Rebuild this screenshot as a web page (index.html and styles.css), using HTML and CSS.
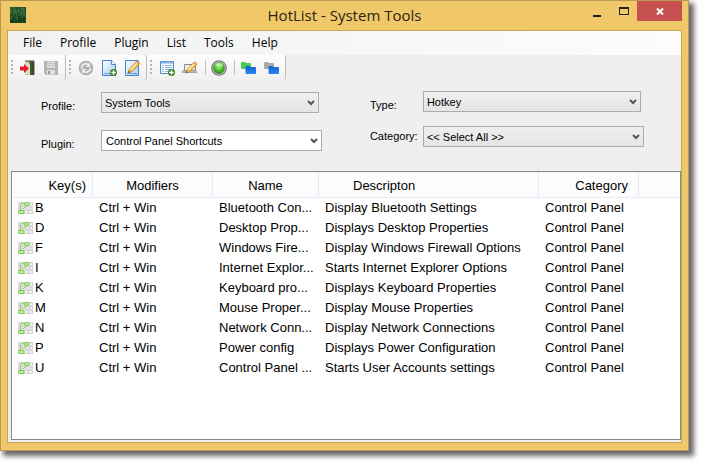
FILE: index.html
```
<!DOCTYPE html>
<html lang="en">
<head>
<meta charset="utf-8">
<title>HotList - System Tools</title>
<link rel="stylesheet" href="styles.css">
</head>
<body>
<svg class="defs" aria-hidden="true">
  <defs>
    <linearGradient id="door" x1="0" x2="1" y1="0" y2="0"><stop offset="0" stop-color="#d4d4d0"/><stop offset=".45" stop-color="#a4aca0"/><stop offset=".55" stop-color="#3d6a20"/><stop offset="1" stop-color="#2b3b1c"/></linearGradient>
    <linearGradient id="paper" x1="0" x2="1" y1="0" y2="1"><stop offset="0" stop-color="#fff"/><stop offset="1" stop-color="#a9cdf2"/></linearGradient>
    <radialGradient id="green" cx=".5" cy=".4" r=".6"><stop offset="0" stop-color="#a8f58a"/><stop offset=".6" stop-color="#47c026"/><stop offset="1" stop-color="#1d7d10"/></radialGradient>
    <linearGradient id="blue" x1="0" x2="0" y1="0" y2="1"><stop offset="0" stop-color="#1660d0"/><stop offset="1" stop-color="#2a86f5"/></linearGradient>
    <symbol id="plus" viewBox="0 0 7 7"><circle cx="3.500" cy="3.500" r="3.500" fill="#3f8424"/><path d="M3.500 1.300v4.400M1.300 3.500h4.400" stroke="#fff" stroke-width="1.300"/></symbol>
    <symbol id="pencil" viewBox="0 0 14 14"><path d="M1 13l1.500-4L9.500 1.500q1-.8 2 0l.8.900q.8 1 0 2L5 11.500z" fill="#f7bd4b" stroke="#b47a26" stroke-width=".8"/><path d="M3.500 9.800L10 3" stroke="#fff0a8" stroke-width="1.500"/><path d="M9 2.500l2.500 2.500 1-1V2.500L11 1z" fill="#e7a27c"/><path d="M1 13l.8-2 1.300 1.200z" fill="#444"/></symbol>
    <symbol id="keys" viewBox="0 0 15 12"><path d="M0 0h15v12H0z" fill="#dddedd"/><g fill="#f8f8f8" stroke="#c2c2c2" stroke-width=".6"><rect x="1" y=".5" width="4" height="3" rx="1"/><rect x="11" y="1" width="3.500" height="3" rx="1"/><rect x="8" y="4.800" width="3" height="2.500" rx="1"/><rect x="11.500" y="5" width="3" height="2.500" rx="1"/><rect x="6.500" y="8.500" width="3.500" height="3" rx="1"/><rect x="10.800" y="8.500" width="3.500" height="3" rx="1"/></g><path d="M2.500 9V3q0-1.500 2-1.500h3M8 4L5 7" fill="none" stroke="#86cf62"/><rect x="6.500" y=".5" width="4.500" height="3" rx="1.200" fill="#b5f48e" stroke="#68bb45" stroke-width=".8"/><rect x=".5" y="8.500" width="5.500" height="3" rx="1" fill="#b5f48e" stroke="#68bb45" stroke-width=".8"/></symbol>
  </defs>
</svg>
<div class="window">
  <header class="titlebar">
    <svg class="app-icon" viewBox="0 0 16 16"><path d="M0 0h16v16H0z" fill="#24502a"/><path d="M1 1v6M4 0v5M6 2v7M9 1v5M12 0v6M14 3v6M2 9v3M7 10v3" stroke="#3f7a3a"/><path d="M0 4h1M3 7h1M8 4h1M10 7h2M13 2h1M5 4h1" stroke="#5a9450"/><path d="M3 10v6M6 12v4M9 9v7M11 11v5M14 10v6M1 13v3" stroke="#0c260f"/><path d="M2 2h1M7 1h1M10 3h1M15 5h1M5 8h1" stroke="#153c1b"/></svg>
    <h1>HotList - System Tools</h1>
    <div class="controls">
      <button class="ctl" aria-label="Minimize"><svg viewBox="0 0 8 8"><path d="M0 7h8" stroke="#222" stroke-width="2"/></svg></button>
      <button class="ctl ctl-max" aria-label="Maximize"><svg viewBox="0 0 10 8"><path d="M0 0h10v8H0zM1 2v5h8V2z" fill="#222" fill-rule="evenodd"/></svg></button>
      <button class="ctl ctl-close" aria-label="Close"><svg viewBox="0 0 8 7"><path d="M1 .5l6 6M7 .5l-6 6" stroke="#fff" stroke-width="2"/></svg></button>
    </div>
  </header>
  <main class="client">
    <nav class="menu">
      <button>File</button><button>Profile</button><button>Plugin</button><button>List</button><button>Tools</button><button>Help</button>
    </nav>
    <div class="toolbars">
      <div class="strip">
        <span class="grip"></span>
        <button aria-label="Exit"><svg viewBox="0 0 16 16"><path d="M5 1h9v14H5z" fill="url(#door)"/><path d="M5 1h9v14" fill="none" stroke="#555"/><path d="M6 2l4 2v11l-4-1z" fill="#d9dbd7"/><path d="M0 6.500h4V4l5 4.500-5 4.500v-2.500H0z" fill="#ed1c24"/></svg></button>
        <button aria-label="Save" disabled><svg viewBox="0 0 16 16"><path d="M1 1h14v14H3l-2-2z" fill="#b5b5b5"/><path d="M4 1.500h8V8H4z" fill="#ddd"/><path d="M4 3.500h8M4 5.500h8" stroke="#c5c5c5"/><path d="M4 10h8v4.500H4z" fill="#e2e2e2"/><path d="M5 11h2v3H5z" fill="#999"/></svg></button>
      </div>
      <div class="strip">
        <span class="grip"></span>
        <button aria-label="Refresh" disabled><svg viewBox="0 0 16 16"><circle cx="8" cy="8" r="7.300" fill="#b0b0b0"/><path d="M3.500 8.500A4.500 4.500 0 0 1 10.500 4.500M12.500 8A4.500 4.500 0 0 1 5.500 11.500" fill="none" stroke="#ececec" stroke-width="1.800"/><path d="M12 2.500v4.500H7.500zM4 13.500V9h4.500z" fill="#ececec"/></svg></button>
        <button aria-label="New profile"><svg viewBox="0 0 16 16"><path d="M1.500.5h9l4 4v11h-13z" fill="url(#paper)" stroke="#3f83cd"/><path d="M10.500.5v4h4" fill="#fff" stroke="#3f83cd"/><path d="M3 13.500h8" stroke="#5fa0df"/><use href="#plus" x="9" y="9" width="7" height="7"/></svg></button>
        <button aria-label="Edit profile"><svg viewBox="0 0 16 16"><path d="M1.500.500h13v15h-13z" fill="url(#paper)" stroke="#3f83cd"/><path d="M3 13.500h10" stroke="#5fa0df"/><use href="#pencil" x="3" y="0" width="14" height="14"/></svg></button>
      </div>
      <div class="strip">
        <span class="grip"></span>
        <button aria-label="Add item"><svg viewBox="0 0 16 16"><path d="M1.500 1.500h13v12h-13z" fill="#fff" stroke="#4a8bd0"/><path d="M2 2.500h12" stroke="#7db1e8" stroke-width="2"/><path d="M3 5.500h10M3 7.500h10M3 9.500h10M3 11.500h10" stroke="#8fb6dc"/><path d="M5.500 4v9" stroke="#fff"/><use href="#plus" x="9" y="9" width="7" height="7"/></svg></button>
        <button aria-label="Edit item"><svg viewBox="0 0 16 16"><path d="M2.500 4.500h11v6h-11z" fill="#eee" stroke="#888"/><path d="M0 12.500h15l-1-2H1z" fill="#bbb" stroke="#888" stroke-width=".6"/><use href="#pencil" x="3" y="1" width="13" height="13"/></svg></button>
        <span class="rule"></span>
        <button aria-label="Active"><svg viewBox="0 0 16 16"><circle cx="8" cy="8" r="7.800" fill="#777"/><circle cx="8" cy="8" r="6.700" fill="#b9b9b9"/><circle cx="8" cy="8" r="5.700" fill="url(#green)"/><path d="M4 6.500a4 3.500 0 0 1 8 0q-4-1.500-8 0z" fill="#d7ffc8" opacity=".7"/></svg></button>
        <span class="rule"></span>
        <button aria-label="Enable group"><svg viewBox="0 0 16 16"><path d="M1 3q0-1 1-1h3l1 1h4q1 0 1 1v5H2q-1 0-1-1z" fill="#4ac955"/><path d="M5.500 7q0-1 1-1h3l1 1H15q1 0 1 1v5q0 1-1 1H6.500q-1 0-1-1z" fill="url(#blue)"/></svg></button>
        <button aria-label="Disable group"><svg viewBox="0 0 16 16"><path d="M1 3q0-1 1-1h3l1 1h4q1 0 1 1v5H2q-1 0-1-1z" fill="#a9a9a9"/><path d="M5.500 7q0-1 1-1h3l1 1H15q1 0 1 1v5q0 1-1 1H6.500q-1 0-1-1z" fill="url(#blue)"/></svg></button>
      </div>
    </div>
    <form class="filters">
      <div class="column">
        <div class="field"><label for="profile">Profile:</label><span class="combo"><select id="profile"><option>System Tools</option></select><svg viewBox="0 0 8 6"><path d="M1 1l3 3 3-3" fill="none" stroke="#555" stroke-width="2"/></svg></span></div>
        <div class="field field-wide"><label for="plugin">Plugin:</label><span class="combo combo-edit"><select id="plugin"><option>Control Panel Shortcuts</option></select><svg viewBox="0 0 8 6"><path d="M1 1l3 3 3-3" fill="none" stroke="#555" stroke-width="2"/></svg></span></div>
      </div>
      <div class="column column-right">
        <div class="field"><label for="type">Type:</label><span class="combo"><select id="type"><option>Hotkey</option></select><svg viewBox="0 0 8 6"><path d="M1 1l3 3 3-3" fill="none" stroke="#555" stroke-width="2"/></svg></span></div>
        <div class="field field-wide"><label for="category">Category:</label><span class="combo"><select id="category"><option>&lt;&lt; Select All &gt;&gt;</option></select><svg viewBox="0 0 8 6"><path d="M1 1l3 3 3-3" fill="none" stroke="#555" stroke-width="2"/></svg></span></div>
      </div>
    </form>
    <div class="list">
      <table>
        <colgroup><col class="c-key"><col class="c-mod"><col class="c-name"><col class="c-desc"><col class="c-cat"><col></colgroup>
        <thead><tr><th class="end">Key(s)</th><th>Modifiers</th><th>Name</th><th class="start">Descripton</th><th class="end-cat">Category</th><th class="rest"></th></tr></thead>
        <tbody>
          <tr><td><svg class="key"><use href="#keys"/></svg>B</td><td>Ctrl + Win</td><td>Bluetooth Con...</td><td>Display Bluetooth Settings</td><td>Control Panel</td><td></td></tr>
          <tr><td><svg class="key"><use href="#keys"/></svg>D</td><td>Ctrl + Win</td><td>Desktop Prop...</td><td>Displays Desktop Properties</td><td>Control Panel</td><td></td></tr>
          <tr><td><svg class="key"><use href="#keys"/></svg>F</td><td>Ctrl + Win</td><td>Windows Fire...</td><td>Display Windows Firewall Options</td><td>Control Panel</td><td></td></tr>
          <tr><td><svg class="key"><use href="#keys"/></svg>I</td><td>Ctrl + Win</td><td>Internet Explor...</td><td>Starts Internet Explorer Options</td><td>Control Panel</td><td></td></tr>
          <tr><td><svg class="key"><use href="#keys"/></svg>K</td><td>Ctrl + Win</td><td>Keyboard pro...</td><td>Displays Keyboard Properties</td><td>Control Panel</td><td></td></tr>
          <tr><td><svg class="key"><use href="#keys"/></svg>M</td><td>Ctrl + Win</td><td>Mouse Proper...</td><td>Display Mouse Properties</td><td>Control Panel</td><td></td></tr>
          <tr><td><svg class="key"><use href="#keys"/></svg>N</td><td>Ctrl + Win</td><td>Network Conn...</td><td>Display Network Connections</td><td>Control Panel</td><td></td></tr>
          <tr><td><svg class="key"><use href="#keys"/></svg>P</td><td>Ctrl + Win</td><td>Power config</td><td>Displays Power Configuration</td><td>Control Panel</td><td></td></tr>
          <tr><td><svg class="key"><use href="#keys"/></svg>U</td><td>Ctrl + Win</td><td>Control Panel ...</td><td>Starts User Accounts settings</td><td>Control Panel</td><td></td></tr>
        </tbody>
      </table>
    </div>
  </main>
</div>
</body>
</html>
```
FILE: styles.css
```
* { box-sizing: border-box; }
body { margin: 0; padding: 0 15px 15px 0; min-height: 100vh; display: flex; background: #fff; color: #000; font-family: "Liberation Sans", Arial, sans-serif; }
button { padding: 0; border: 0; background: none; color: inherit; font: inherit; }
svg { display: block; }
.defs { position: absolute; width: 0; height: 0; }

.window { flex: 1; min-width: 0; display: flex; flex-direction: column; padding: 0 6px 7px; border: 1px solid #b8994f; background: #f0c869; box-shadow: 4px 4px 5px 1px rgba(0, 0, 0, .6); }
.titlebar { display: grid; grid-template-columns: 1fr auto 1fr; height: 29px; }
.app-icon { width: 16px; height: 16px; margin: 6px 0 0 3px; }
h1 { margin: 0; font: 15px/28px "Open Sans", sans-serif; color: #2b2410; }
.controls { display: flex; justify-content: flex-end; }
.ctl { display: flex; justify-content: center; align-items: center; width: 27px; height: 20px; }
.ctl svg { width: 8px; height: 8px; margin-top: 4px; }
.ctl-max svg { width: 10px; margin-top: 0; }
.ctl-close { width: 45px; background: #c75050; }
.ctl-close svg { height: 7px; margin-top: 0; }

.client { flex: 1; display: flex; flex-direction: column; border: 1px solid #c9a557; background: #efefef; }
.menu { display: flex; gap: 18px; height: 24px; padding-left: 15px; background: linear-gradient(90deg, #f1f1f1, #fcfcfc); font: 12px/24px "Open Sans", sans-serif; }
.toolbars { display: flex; height: 25px; }
.strip { display: flex; align-items: center; padding: 0 6px 0 3px; border-right: 1px solid #bcbcbc; border-radius: 3px; background: linear-gradient(#fdfdfd, #f0f0f0); }
.strip svg { width: 16px; height: 16px; }
.strip button { margin-left: 7px; }
.grip { width: 2px; height: 15px; background: repeating-linear-gradient(#b4b4b4 0 2px, transparent 2px 4px); }
.rule { width: 1px; height: 15px; margin-left: 7px; background: #bdbdbd; }
.strip .rule + button { margin-left: 5px; }

.filters { display: flex; font-size: 11px; padding: 11px 37px 20px 33px; gap: 48px; }
.column { flex: 41; display: flex; flex-direction: column; gap: 17px; padding-top: 1px; }
.column-right { flex: 40; gap: 14px; padding-top: 0; }
.field { display: flex; padding-right: 3px; }
.field-wide { padding-right: 0; }
.field label { width: 60px; line-height: 28px; height: 21px; }
.column-right label { width: 53px; }
.column-right .field-wide label { line-height: 20px; }
.combo { position: relative; flex: 1; }
.combo select { display: block; width: 100%; height: 21px; padding: 0 20px 0 3px; border: 1px solid #acacac; border-radius: 0; background: linear-gradient(#efefef, #e5e5e5); color: #000; font: inherit; appearance: none; }
.combo svg { position: absolute; right: 4px; top: 8px; width: 8px; height: 6px; pointer-events: none; }
.combo-edit select { padding-left: 4px; background: #fff; }

.list { flex: 1; margin: 0 0 2px 3px; border: 1px solid #828790; background: #fff; }
table { width: 100%; table-layout: fixed; border-collapse: separate; border-spacing: 0; font-size: 13px; }
.c-key { width: 81px; }
.c-mod { width: 120px; }
.c-name { width: 106px; }
.c-desc { width: 220px; }
.c-cat { width: 100px; }
th { height: 26px; padding: 2px 0 0; border-right: 1px solid #e1ebf9; border-bottom: 1px solid #e1ebf9; background: #fcfcfc; font-weight: 400; text-align: center; }
.end { padding-right: 6px; text-align: right; }
.end-cat { padding-right: 10px; text-align: right; }
.start { padding-left: 34px; text-align: left; }
.rest { border-right: 0; }
td { height: 20px; padding: 0 0 0 6px; white-space: nowrap; line-height: 20px; }
.key { display: inline-block; width: 15px; height: 12px; margin-right: 2px; vertical-align: -2px; }
```
